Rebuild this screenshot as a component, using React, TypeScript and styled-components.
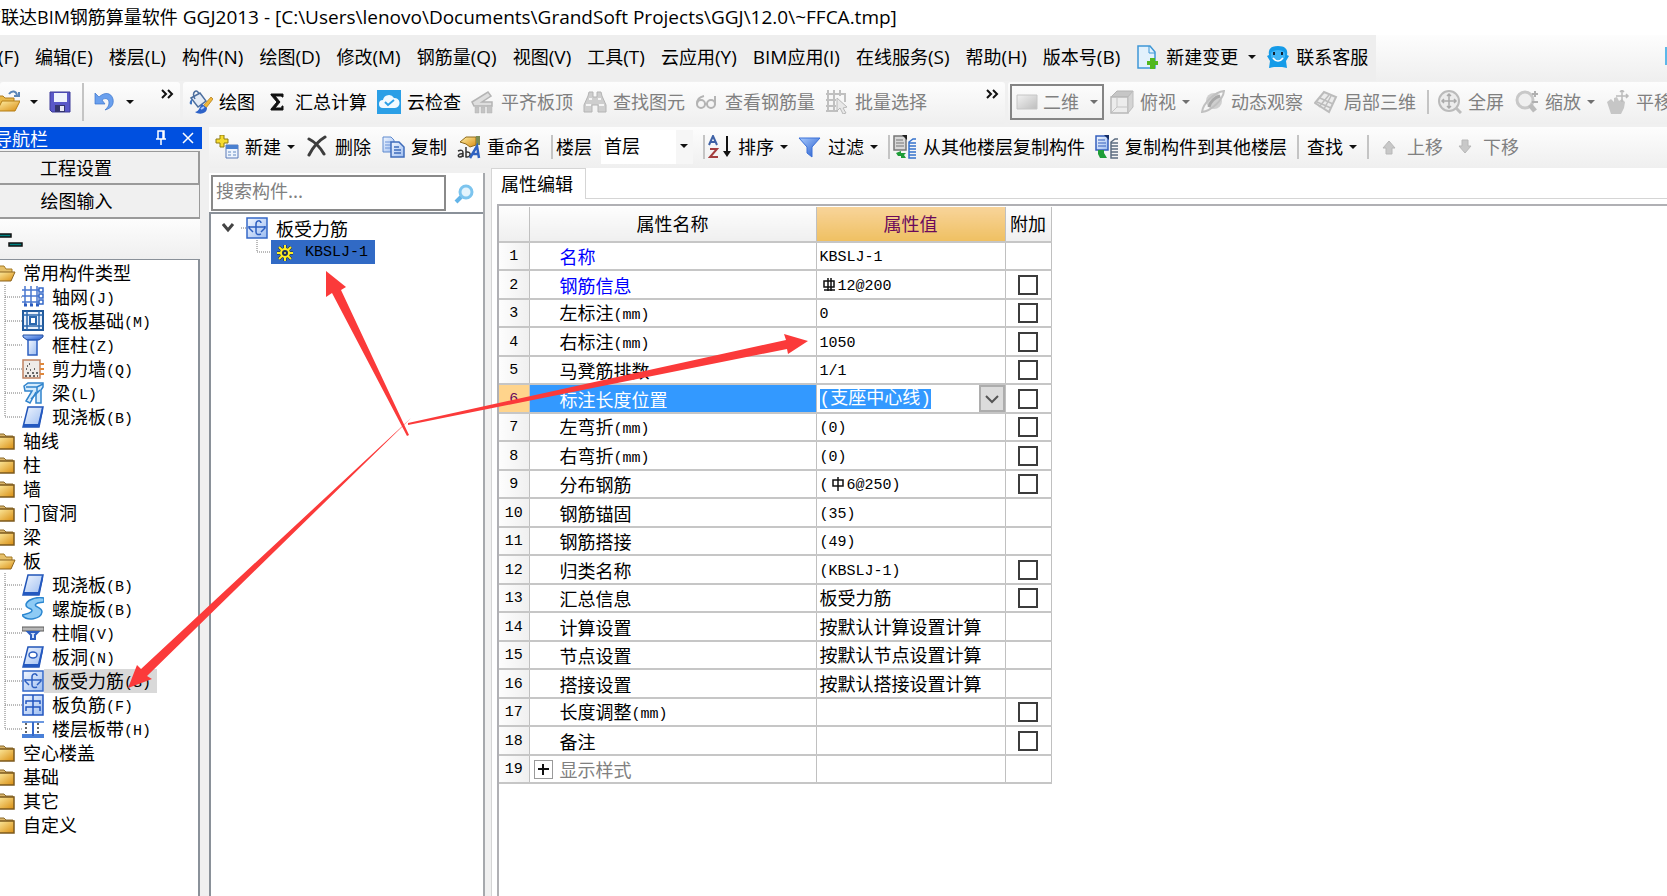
import React from 'react';
import styled, { createGlobalStyle, css } from 'styled-components';

const ui = `"Open Sans", "Noto Sans CJK SC", sans-serif`;
const song = `"Noto Sans CJK SC", sans-serif`;
const mono = `"Liberation Mono", "Noto Sans CJK SC", monospace`;

const Global = createGlobalStyle`
  * { box-sizing: border-box; }
  body { margin: 0; background: #f0f0f0; color: #000; font: 18px/24px ${ui}; overflow: hidden; }
  button, input, select { font: inherit; color: inherit; margin: 0; padding: 0; border: 0; border-radius: 0; background: none; }
  svg { display: block; flex: none; }
  ul { list-style: none; margin: 0; padding: 0; }
`;

const strip = 'linear-gradient(#fdfdfd, #efefef)';

const Page = styled.div`
  position: relative;
  min-height: 100vh;
  display: flex;
  flex-direction: column;
  overflow: hidden;
`;
const TitleBar = styled.header`
  height: 35px;
  padding-bottom: 2px;
  background: #fff;
  display: flex;
  align-items: center;
  white-space: pre;
`;
const TitleText = styled.div`
  margin-left: -17px;
`;
const Latin = styled.span`
  font-size: 19px;
  line-height: 24px;
`;
const MenuRow = styled.nav`
  height: 46px;
  display: flex;
  background: ${strip};
`;
const MenuGroup = styled.div`
  display: flex;
  align-items: center;
  gap: 16px;
  margin-left: -38px;
  padding: 0 8px 2px 0;
  background: #eee;
  white-space: nowrap;
`;
const MenuItem = styled.button`
  height: 28px;
  white-space: nowrap;
`;
const MenuTools = styled.div`
  display: flex;
  align-items: center;
  gap: 10px;
`;
const WindowEdge = styled.span`
  width: 2px;
  height: 18px;
  margin: 12px 0 0 auto;
  background: #5cb8ea;
`;
const ToolRow = styled.div`
  height: 46px;
  display: flex;
  gap: 3px;
  padding: 1px 0 3px;
`;
const Strip = styled.div<{ $gap?: number; $left?: number; $width?: number }>`
  display: flex;
  align-items: center;
  flex: none;
  gap: ${p => p.$gap ?? 10}px;
  padding-left: ${p => p.$left ?? 0}px;
  padding-bottom: 2px;
  ${p => p.$width ? css`width: ${p.$width}px;` : css`flex: 1 0 auto;`}
  background: ${strip};
  border-radius: 3px;
`;
const BuildStrip = styled.div`
  display: flex;
  align-items: center;
  gap: 10px;
  height: 41px;
  padding: 0 0 2px 6px;
  background: ${strip};
`;
const Tool = styled.button<{ $off?: boolean }>`
  display: flex;
  align-items: center;
  gap: 6px;
  height: 30px;
  flex: none;
  white-space: nowrap;
  color: ${p => p.$off ? '#808080' : '#000'};
`;
const Sep = styled.i<{ $tall?: boolean; $tight?: boolean }>`
  width: 2px;
  height: ${p => p.$tall ? 38 : 24}px;
  margin-right: ${p => p.$tight ? -7 : -2}px;
  flex: none;
  background: #c4c4c4;
`;
const More = styled.button`
  width: 16px;
  margin: 0 4px 14px auto;
`;
const ViewSelect = styled.label`
  display: flex;
  align-items: center;
  gap: 5px;
  width: 94px;
  height: 36px;
  margin-right: -5px;
  padding: 0 4px;
  border: 2px solid #858585;
  color: #808080;
`;
const PlainSelect = styled.select`
  appearance: none;
  flex: 1;
  min-width: 0;
  outline: 0;
`;
const FloorField = styled.label`
  display: flex;
  align-items: center;
  gap: 9px;
`;
const FloorBox = styled.span`
  display: flex;
  align-items: center;
  width: 92px;
  height: 34px;
  padding: 0 5px 2px 3px;
  background: linear-gradient(90deg, #fff 75px, #f6f6f6 75px);
`;
const Body = styled.div`
  flex: 1;
  display: flex;
  gap: 7px;
`;
const Sidebar = styled.aside`
  width: 202px;
  flex: none;
  display: flex;
  flex-direction: column;
`;
const SideTitle = styled.div`
  height: 22px;
  display: flex;
  align-items: center;
  gap: 16px;
  padding-right: 8px;
  background: #0050e0;
  color: #fff;
  overflow: hidden;
  font-family: ${song};
`;
const SideName = styled.span`
  margin: 0 auto 0 -6px;
`;
const SideMain = styled.div`
  flex: 1;
  display: flex;
  flex-direction: column;
  margin: 2px 2px 0 0;
`;
const SideTab = styled.button<{ $active?: boolean }>`
  height: 34px;
  padding: 0 46px 2px 0;
  border: solid #9a9a9a;
  border-width: ${p => p.$active ? '1px 2px 2px 0' : '0 1px 2px 0'};
  background: #f0f0f0;
  font-family: ${song};
`;
const SideTools = styled.div`
  height: 40px;
  background: ${strip};
`;
const SideTree = styled.div`
  flex: 1;
  padding-top: 1px;
  background: #fff;
  border: solid #8a9199;
  border-width: 1px 2px 0 0;
`;
const Row = styled.li<{ $child?: boolean }>`
  display: flex;
  align-items: center;
  height: 24px;
  gap: ${p => p.$child ? 0 : 7}px;
  white-space: nowrap;
`;
const Label = styled.span<{ $on?: boolean }>`
  padding: 0 6px 0 8px;
  height: 24px;
  background: ${p => p.$on ? '#d9d9d9' : 'none'};
`;
const Mono = styled.span`
  font-family: ${mono};
  font-size: 15px;
  line-height: 20px;
  vertical-align: 1px;
`;
const Work = styled.main`
  flex: 1;
  min-width: 0;
  display: flex;
  flex-direction: column;
`;
const Panels = styled.div`
  flex: 1;
  display: flex;
  gap: 6px;
`;
const ListPanel = styled.section`
  width: 276px;
  flex: none;
  margin-top: 5px;
  display: flex;
  flex-direction: column;
  border-right: 2px solid #a6a9ad;
`;
const Search = styled.form`
  display: flex;
  height: 39px;
  padding: 2px 0 1px 2px;
  background: #fff;
`;
const SearchInput = styled.input`
  flex: 1;
  min-width: 0;
  height: 36px;
  padding: 0 3px 6px;
  border: 2px solid #8a8a8a;
  font-family: ${song};
  &::placeholder { color: #808080; opacity: 1; }
`;
const SearchButton = styled.button`
  width: 37px;
  display: grid;
  place-items: center;
`;
const ListTree = styled.div`
  flex: 1;
  padding: 2px 0 0 11px;
  background: #fff;
  border: solid #8a9199;
  border-width: 2px 0 0 2px;
  font-family: ${song};
`;
const Picked = styled.span`
  display: flex;
  align-items: center;
  gap: 12px;
  height: 24px;
  padding: 2px 7px 0 6px;
  background: #316ac5;
`;
const PropPanel = styled.section`
  flex: 1;
  min-width: 0;
  display: flex;
  flex-direction: column;
  background: #fff;
  border-left: 1px solid #d5d5d5;
`;
const TabRow = styled.div`
  height: 31px;
  display: flex;
  &::after { content: ''; flex: 1; border-bottom: 1px solid #d5d5d5; }
`;
const Tab = styled.button`
  padding: 0 12px 2px 9px;
  border: solid #d5d5d5;
  border-width: 1px 1px 0 0;
  font-family: ${song};
`;
const Sheet = styled.div`
  flex: 1;
  margin: 5px 0 0 5px;
  padding: 1px 0 0;
  border: solid #b0b0b4;
  border-width: 2px 0 0 2px;
`;
const Table = styled.table`
  width: 552px;
  border-collapse: collapse;
  table-layout: fixed;
  font-family: ${song};
  line-height: 24px;
`;
const Th = styled.th<{ $hot?: boolean }>`
  height: 35px;
  padding: 0 0 2px;
  font-weight: 400;
  border-right: 1px solid #c0c0c0;
  border-bottom: 2px solid #c6c6c6;
  background: ${p => p.$hot ? 'linear-gradient(#f8d49a, #efc062)' : 'linear-gradient(#fdfdfd, #efefef)'};
  color: ${p => p.$hot ? '#6a0a5c' : '#000'};
`;
const Tr = styled.tr`
  height: 28px;
  &:nth-child(even) { height: 29px; }
`;
const Td = styled.td<{ $on?: boolean }>`
  padding: 0;
  border-right: 1px solid #c0c0c0;
  border-bottom: 2px solid #c6c6c6;
  white-space: nowrap;
  background: ${p => p.$on ? '#3399ff' : '#fff'};
`;
const Num = styled.th<{ $on?: boolean }>`
  padding: 2px 0 0;
  font: 15px/20px ${mono};
  border-right: 1px solid #c0c0c0;
  border-bottom: 2px solid #c6c6c6;
  color: ${p => p.$on ? '#6a0a5c' : '#000'};
  background: ${p => p.$on ? '#ffd48c' : 'linear-gradient(90deg, #fdfdfd, #f0f0f0)'};
`;
const Name = styled.div<{ $tone?: string }>`
  display: flex;
  align-items: center;
  height: 24px;
  color: ${p => p.$tone ?? '#000'};
`;
const Gutter = styled.span`
  width: 30px;
  padding-left: 4px;
  flex: none;
  color: #000;
`;
const Expand = styled.button`
  display: grid;
  place-items: center;
  width: 19px;
  height: 19px;
  border: 1px solid #9a9a9a;
`;
const Value = styled.div`
  display: flex;
  align-items: center;
  height: 24px;
  padding: 0 0 2px 3px;
`;
const Combo = styled.div`
  display: flex;
  align-items: center;
  justify-content: space-between;
  height: 26px;
  padding-left: 3px;
`;
const ComboInput = styled.input`
  width: 111px;
  height: 20px;
  background: #3399ff;
  color: #fff;
  font-family: ${mono};
`;
const ComboButton = styled.button`
  display: grid;
  place-items: center;
  width: 26px;
  height: 27px;
  background: #dcdcdc;
  border: 2px solid #adadad;
`;
const Check = styled.input`
  appearance: none;
  display: block;
  width: 20px;
  height: 20px;
  margin: 0 auto;
  border: 2px solid #3c3c3c;
  background: #fff;
`;
const Arrows = styled.svg`
  position: absolute;
  left: 0;
  top: 0;
  pointer-events: none;
`;
const Paints = styled.svg`
  position: absolute;
`;

/* Half-width runs are set in the monospaced face, the rest in the CJK one. */
const Mixed = ({ children }: { children: string }) => (
  <span>{children.split(/([\x20-\x7e]+)/).filter(Boolean).map((run, i) =>
    /^[\x20-\x7e]/.test(run) ? <Mono key={i}>{run}</Mono> : run)}</span>
);

const Svg = ({ w = 24, h = 24, children }: { w?: number; h?: number; children: React.ReactNode }) => (
  <svg width={w} height={h} viewBox={`0 0 ${w} ${h}`} fill="none" aria-hidden="true">{children}</svg>
);
const Caret = ({ color = '#111' }: { color?: string }) => (
  <Svg w={8} h={6}><path d="M0 1h8L4 5z" fill={color} /></Svg>
);

const Defs = () => (
  <Paints width="0" height="0" aria-hidden="true">
    <defs>
      <linearGradient id="gold" x1="0" y1="0" x2="1" y2="1"><stop offset="0" stopColor="#fff0a8" /><stop offset="1" stopColor="#d98d10" /></linearGradient>
      <linearGradient id="blue" x1="0" y1="0" x2="1" y2="1"><stop offset="0" stopColor="#f2f7ff" /><stop offset="1" stopColor="#9cbcf0" /></linearGradient>
      <linearGradient id="deep" x1="0" y1="0" x2="1" y2="1"><stop offset="0" stopColor="#a9cbff" /><stop offset="1" stopColor="#1f56c8" /></linearGradient>
      <linearGradient id="grey" x1="0" y1="0" x2="1" y2="1"><stop offset="0" stopColor="#f2f2f2" /><stop offset="1" stopColor="#bdbdbd" /></linearGradient>
    </defs>
  </Paints>
);

const openFolder = <g transform="translate(-4 0)"><path d="M1 20V6h6l2 2h9v4" fill="#e8b84a" stroke="#b07d1c" /><path d="M6 11h18l-5 10H1z" fill="url(#gold)" stroke="#b57e17" /><path d="M13 4c3-4 7-3 8 1m2-3v4h-5" stroke="#5b86b8" strokeWidth="2" /></g>;

const icons = {
  save: <Svg><path d="M2 2h20v20H4l-2-2z" fill="#5a58c8" stroke="#3c3a98" /><path d="M6 3h13v9H6z" fill="#f0f3fc" /><path d="M7 15h10v7H7z" fill="#35356e" /><path d="M12 16h4v5h-4z" fill="#e8e8f4" /></Svg>,
  undo: <Svg><path d="M3 3v11h10l-3-4c4-3 7-1 7 3 0 3-2 5-4 7 7-2 9-6 8-11-2-7-9-7-14-2z" fill="#6aa0ee" stroke="#3b74cc" strokeWidth=".7" /></Svg>,
  paint: <Svg><path d="M2 8l9-5 6 8-8 6z" fill="#e4ebf5" stroke="#4d6f9f" strokeWidth="1.5" /><path d="M6 9C2 2 8-2 10 4" stroke="#4d6f9f" strokeWidth="1.5" /><path d="M3 9c-4 3-2 7 0 5z" fill="#3f74c0" /><path d="M24 9l-7 9-3-2 8-9z" fill="#f1b83b" stroke="#a97411" strokeWidth=".7" /><path d="M13 14l5 4c0 6-8 7-12 4 5-1 4-5 7-8z" fill="#2d62c8" /><path d="M12 19l3-2" stroke="#a9c8ff" strokeWidth="2" /></Svg>,
  sigma: <Svg><path d="M18 7V4H6v1l6 7-6 7v1h12v-4h-1c0 2-1 2-3 2H10l5-6-5-6h4c2 0 3 0 3 1z" fill="#111" stroke="#111" /></Svg>,
  cloud: <Svg><path d="M0 0h24v24H0z" fill="#2b9fe6" /><path d="M6 18a4 4 0 010-8 6 6 0 0111-2 5 5 0 011 10z" fill="#f2faff" /><path d="M8 12l3 3 6-5" stroke="#2b9fe6" strokeWidth="2" /></Svg>,
  level: <Svg><path d="M1 12L17 2l3 4-9 6h10v4H3z" fill="#dedede" stroke="#b4b4b4" strokeWidth="1.5" /><path d="M4 17h4v6H4zm6 0h4v6h-4zm6-1h5v7h-5z" fill="#c4c4c4" stroke="#b4b4b4" strokeWidth=".5" /></Svg>,
  find: <Svg><path d="M6 2h4v5h4V2h4l1 4 4 9v7h-8v-7h-6v7H1v-7l4-9z" fill="#cecece" stroke="#b4b4b4" /><path d="M3 15h5m8 0h5M6 9h3m6 0h3" stroke="#f5f5f5" strokeWidth="2" /></Svg>,
  glasses: <Svg><path d="M9 6C4 7 2 10 2 14" stroke="#b4b4b4" strokeWidth="2" /><circle cx="6" cy="14" r="4" stroke="#b4b4b4" strokeWidth="2" /><circle cx="16" cy="14" r="4" stroke="#b4b4b4" strokeWidth="2" /><path d="M10 14h2M20 6v9" stroke="#b4b4b4" strokeWidth="2" /></Svg>,
  batch: <Svg><path d="M3 0v22M9 0v22M15 0v6M1 4h20M1 10h10M1 16h10M1 21h12M20 4v8" stroke="#c0c0c0" strokeWidth="2" /><path d="M12 8l10 9-4 1 3 5-3 1-3-6-3 3z" fill="#e8e8e8" stroke="#b8b8b8" /></Svg>,
  flat: <Svg w={22}><path d="M1 5h20v14H1z" fill="url(#grey)" stroke="#c6c6c6" /></Svg>,
  cube: <Svg><path d="M1 7l6-6h16l-5 6z" fill="#c6c6c6" stroke="#b4b4b4" /><path d="M1 7h17v16H1z" fill="#ececec" stroke="#b8b8b8" strokeWidth="1.5" /><path d="M18 7l5-6v16l-5 6z" fill="#d4d4d4" stroke="#bcbcbc" /><path d="M2 22l5-5h11M7 17V8" stroke="#c4c4c4" /></Svg>,
  orbit: <Svg><circle cx="13" cy="11" r="8" fill="#cfcfcf" /><path d="M23 1c-9 1-21 12-22 21 9-1 21-12 22-21z" stroke="#c0c0c0" strokeWidth="2" /><path d="M8 17C9 12 14 7 19 6" stroke="#a8a8a8" strokeWidth="3" /></Svg>,
  local: <Svg><path d="M1 13L10 2l12 5-7 15z" fill="#ececec" stroke="#bcbcbc" strokeWidth="2" /><path d="M6 8l13 6M5 17L15 5M10 19l7-13M3 12l14 6" stroke="#bcbcbc" strokeWidth="1.5" /></Svg>,
  full: <Svg><circle cx="11" cy="11" r="10" fill="#ececec" stroke="#bbb" strokeWidth="2" /><path d="M11 4v14M4 11h14M9 6l2-2 2 2M9 16l2 2 2-2M6 9l-2 2 2 2M16 9l2 2-2 2" stroke="#aaa" strokeWidth="1.5" /><path d="M18 18l5 5" stroke="#bdbdbd" strokeWidth="3" /></Svg>,
  zoom: <Svg><circle cx="10" cy="10" r="8" fill="#efefef" stroke="#c8c8c8" strokeWidth="3" /><path d="M15 15l5 6" stroke="#bbb" strokeWidth="5" /><path d="M17 4h6m-3-3v6m-3 5h6" stroke="#b0b0b0" strokeWidth="2" /></Svg>,
  pan: <Svg><path d="M1 12l4-3 3 3V8l3-1 2 4 3-2 3 3-1 6-3 6H5z" fill="#c6c6c6" /><path d="M16 0v12M10 6h12M14 2l2-2 2 2m2 2l2 2-2 2" stroke="#bbb" strokeWidth="1.5" /></Svg>,
  create: <Svg><path d="M5 0h4v4h4v4H9v4H5V8H1V4h4z" fill="#f7dc2e" stroke="#8e7a12" /><path d="M11 10h12v13H11z" fill="#eef4fd" stroke="#5a7bb8" /><path d="M11 10h12v4H11z" fill="#4a80d0" /><path d="M13 17h3m2 0h3m-8 3h3m2 0h3" stroke="#a8bfdf" strokeWidth="2" /></Svg>,
  remove: <Svg><path d="M4 4c6 3 11 8 15 15M20 2C13 6 8 12 4 20" stroke="#3d3d3d" strokeWidth="3" strokeLinecap="round" /></Svg>,
  copy: <Svg><path d="M2 2h8l3 3v12H2z" fill="url(#blue)" stroke="#5f8ace" /><path d="M4 7h6m-6 3h6m-6 3h6" stroke="#6c94d8" /><path d="M10 7h8l5 5v10H10z" fill="url(#blue)" stroke="#3f6cba" strokeWidth="1.5" /><path d="M13 12h5m-5 3h7m-7 3h7" stroke="#3f6cba" strokeWidth="1.5" /></Svg>,
  rename: <Svg><path d="M3 7l6-5h10v8l-6 2-4-3z" fill="url(#gold)" stroke="#8e6a1c" /><path d="M19 1h4v9h-4z" fill="#7a8a52" /><path d="M1 16c4-2 5 0 5 2v4m0-3c-5-1-6 3-3 3 2 0 3-1 3-3M9 12v10c5 1 6-6 0-5" stroke="#333" strokeWidth="1.5" /><path d="M13 23l7-12 2 12m-6-4h6" stroke="#2f62c0" strokeWidth="2.5" /></Svg>,
  sort: <Svg><path d="M1 10L5 1l4 9M3 7h5" stroke="#3f62a6" strokeWidth="2" /><path d="M2 14h7l-7 8h8" stroke="#a43e3e" strokeWidth="2" /><path d="M19 1v16" stroke="#111" strokeWidth="2" /><path d="M15 16h8l-4 6z" fill="#111" /></Svg>,
  filter: <Svg><path d="M1 3h21l-8 9v10l-5-4v-6z" fill="url(#deep)" stroke="#3a70d8" /></Svg>,
  fromFloor: <Svg><path d="M1 1h12v14H1z" fill="#d8d8d8" stroke="#777" strokeWidth="1.5" /><path d="M3 5h7M3 8h8M3 11h8" stroke="#777" /><path d="M9 0h5v5z" fill="#222" /><path d="M3 18l5-2v2h5l-2 2 2 3H8v-2H5z" fill="#1f9d38" /><path d="M23 4h-3l-4 3v16h7M16 8h7m-7 3h7m-7 3h7m-7 3h7m-7 3h7" stroke="#3572cc" strokeWidth="1.5" /></Svg>,
  toFloor: <Svg><path d="M1 1h12v14H1z" fill="url(#blue)" stroke="#345fbd" strokeWidth="1.5" /><path d="M3 5h7M3 8h8M3 11h8" stroke="#345fbd" /><path d="M9 0h5v5z" fill="#142d66" /><path d="M3 15h6v3l3 5H5l-2-4z" fill="#1f9d38" /><path d="M23 4h-3l-4 3v16h7M16 8h7m-7 3h7m-7 3h7m-7 3h7m-7 3h7" stroke="#5c6c80" strokeWidth="1.5" /></Svg>,
  up: <Svg><path d="M12 6l6 7h-3v6H9v-6H6z" fill="#c8c8c8" stroke="#b8b8b8" /></Svg>,
  down: <Svg><path d="M12 18l6-7h-3V5H9v6H6z" fill="#c8c8c8" stroke="#b8b8b8" /></Svg>,
  change: <Svg><path d="M2 1h12l5 6v16H2z" fill="#e2f1fc" stroke="#3f97d6" strokeWidth="1.5" /><path d="M13 1v7h6" stroke="#3f97d6" /><path d="M14 13h5v3h3v4h-3v4h-5v-4h-3v-4h3z" fill="#52b81e" /></Svg>,
  support: <Svg><path d="M12 1c8 0 10 4 9 9l2 1-3 5 1 7-5-1h-8l-5 1 1-7-3-5 2-1C2 5 4 1 12 1z" fill="#159be8" /><path d="M5 8c2-4 12-4 14 0v4c-3 6-11 6-14 0z" fill="#3fb4f5" /><path d="M8 7v3m8-3v3" stroke="#123" strokeWidth="2" /><path d="M7 13c3 4 7 4 10 0" stroke="#fff" strokeWidth="1.5" /></Svg>,
};

const folder = <Svg w={16}><path d="M-2 8V5h6l2 2h7v3" fill="#d9b469" stroke="#8b6a2c" /><path d="M-4 8h18v12H-4z" fill="url(#gold)" stroke="#7c5a1e" strokeWidth="1.5" /></Svg>;
const folderOpen = <Svg w={16}><path d="M-2 19V5h6l2 3h6v4" fill="#e6c06a" stroke="#a57a24" /><path d="M-2 11h17l-4 9H-4z" fill="url(#gold)" stroke="#8b6420" /></Svg>;

const slab = <path d="M6 2h15l-4 20H1z" fill="url(#blue)" stroke="#2255b8" strokeWidth="1.5" />;
const slabFoot = <path d="M1 19h15l4-17h1v4l-4 16H1z" fill="#2459c0" />;
const kinds: Record<string, React.ReactNode> = {
  grid: <Svg w={22}><path d="M3 1v20M9 1v20M15 1v20M0 5h20M0 11h20M0 17h20" stroke="#4a78d0" strokeWidth="1.5" /><path d="M2 20h3m3 0h3m3 0h3" stroke="#2b5cc0" strokeWidth="3" /><path d="M17 3h4v4h-4zm0 6h4v4h-4zm0 6h4v4h-4z" fill="#fff" stroke="#3568c8" strokeWidth="1.5" /></Svg>,
  raft: <Svg w={22}><path d="M1 2h20v19H1z" fill="#e8f0fb" stroke="#215a9c" strokeWidth="2" /><path d="M5 2v19M17 2v19M1 6h20M1 17h20" stroke="#2b68ae" strokeWidth="1.5" /><path d="M8 8h6v7H8z" fill="#fff" stroke="#2b68ae" strokeWidth="2" /></Svg>,
  column: <Svg w={22}><path d="M1 2h20v2l-4 3H5L1 4z" fill="url(#deep)" stroke="#234f9f" /><path d="M6 7h9v15H6z" fill="url(#blue)" stroke="#2d5fc0" strokeWidth="1.5" /></Svg>,
  wall: <Svg w={22}><path d="M1 3h17v18H1z" fill="#efebe8" stroke="#c08262" strokeWidth="1.5" /><path d="M3 19h2m2 0h2m2 0h2m2 0h1M5 16h2m3 0h2m2 0h2M4 12h1m3 1h1m-2-6h1m-3 2h1m6 3h1" stroke="#666" strokeWidth="2" /><path d="M18 7h4m-4 5h4m-4 5h4" stroke="#e0873a" strokeWidth="2" /></Svg>,
  beam: <Svg w={22}><path d="M2 5l4-3h15v4l-2 3v13h-5V11l-6 11-4-2 6-10H3z" fill="#d5ebfc" stroke="#3184cc" strokeWidth="1.5" /><path d="M4 6h11l6-3M9 18l9-9M15 6v5" stroke="#3184cc" strokeWidth="1.5" /></Svg>,
  slab: <Svg w={22}>{slab}{slabFoot}</Svg>,
  spiral: <Svg w={22}><path d="M22 1C10-1 1 6 5 10c2 2 7 2 4 5-2 2-6 2-9 3 5 7 19 4 20-3 0-5-9-5-6-8 2-2 6-1 8-2z" fill="#8ecbf5" stroke="#2a86d0" strokeWidth="1.5" /></Svg>,
  cap: <Svg w={22}><path d="M0 6h22v4H0z" fill="#b8b8b8" stroke="#5a5a5a" /><path d="M6 11h10l-3 3v4H9v-4z" fill="#cfe0fa" stroke="#2d5fc0" strokeWidth="2" /></Svg>,
  hole: <Svg w={22}>{slab}{slabFoot}<ellipse cx="11" cy="10" rx="4" ry="3" fill="#fff" stroke="#2d5fc0" strokeWidth="1.5" /></Svg>,
  rebar: <Svg w={22}><path d="M1 2h20v20H1z" fill="url(#blue)" stroke="#3568c8" strokeWidth="1.5" /><path d="M3 10v2l4 4M19 10v2l-4 4M3 11h16M15 7c0-3-5-3-5 1v8c0 3 3 3 5 2" stroke="#2d5fc0" strokeWidth="1.5" /></Svg>,
  negative: <Svg w={22}><path d="M1 2h20v20H1z" fill="url(#blue)" stroke="#2255c0" strokeWidth="1.5" /><path d="M11 2v20M4 11V8h14v3M4 18v-4h14v4" stroke="#2255c0" strokeWidth="1.5" /></Svg>,
  band: <Svg w={22}><path d="M0 5h22" stroke="#6b98e0" strokeWidth="2" /><path d="M0 19h22" stroke="#4a80d8" strokeWidth="4" /><path d="M11 5v14" stroke="#3568c8" strokeWidth="2" /><path d="M4 6v11M16 6v11" stroke="#333" strokeWidth="1.5" strokeDasharray="2 2" /></Svg>,
};

type Node = { name: string; items?: [string, string, boolean?][] };
const tree: Node[] = [
  { name: '常用构件类型', items: [['grid', '轴网(J)'], ['raft', '筏板基础(M)'], ['column', '框柱(Z)'], ['wall', '剪力墙(Q)'], ['beam', '梁(L)'], ['slab', '现浇板(B)']] },
  { name: '轴线' }, { name: '柱' }, { name: '墙' }, { name: '门窗洞' }, { name: '梁' },
  { name: '板', items: [['slab', '现浇板(B)'], ['spiral', '螺旋板(B)'], ['cap', '柱帽(V)'], ['hole', '板洞(N)'], ['rebar', '板受力筋(S)', true], ['negative', '板负筋(F)'], ['band', '楼层板带(H)']] },
  { name: '空心楼盖' }, { name: '基础' }, { name: '其它' }, { name: '自定义' },
];

type Prop = { name: string; value?: string; check?: boolean; tone?: string; bar?: number; lead?: string };
const props: Prop[] = [
  { name: '名称', value: 'KBSLJ-1', tone: '#0000ff' },
  { name: '钢筋信息', value: '12@200', check: true, tone: '#0000ff', bar: 2 },
  { name: '左标注(mm)', value: '0', check: true },
  { name: '右标注(mm)', value: '1050', check: true },
  { name: '马凳筋排数', value: '1/1', check: true },
  { name: '标注长度位置', value: '(支座中心线)', check: true, tone: '#fff' },
  { name: '左弯折(mm)', value: '(0)', check: true },
  { name: '右弯折(mm)', value: '(0)', check: true },
  { name: '分布钢筋', value: '6@250)', check: true, bar: 1, lead: '(' },
  { name: '钢筋锚固', value: '(35)' },
  { name: '钢筋搭接', value: '(49)' },
  { name: '归类名称', value: '(KBSLJ-1)', check: true },
  { name: '汇总信息', value: '板受力筋', check: true },
  { name: '计算设置', value: '按默认计算设置计算' },
  { name: '节点设置', value: '按默认节点设置计算' },
  { name: '搭接设置', value: '按默认搭接设置计算' },
  { name: '长度调整(mm)', check: true },
  { name: '备注', check: true },
  { name: '显示样式', tone: '#808080' },
];

const BarMark = ({ strokes }: { strokes: number }) => (
  <Svg w={18} h={18}>
    <path d="M4 6h10v6H4z" stroke="#111" strokeWidth="1.5" />
    <path d={strokes === 2 ? 'M8 3v13M11 3v13M4 15h11' : 'M9 3v14'} stroke="#111" strokeWidth="1.5" />
  </Svg>
);

const Link = ({ last }: { last: boolean }) => (
  <Svg w={22}><path d={last ? 'M5 0v12h17' : 'M5 0v24M5 12h17'} stroke="#777" strokeDasharray="1 1" /></Svg>
);

const T = ({ icon, off, caret, children }: { icon?: keyof typeof icons; off?: boolean; caret?: boolean; children?: React.ReactNode }) => (
  <Tool $off={off}>{icon && icons[icon]}{children}{caret && <Caret color={off ? '#707070' : '#111'} />}</Tool>
);

const Chevrons = () => <Svg w={16} h={12}><path d="M2 1l4 4-4 4M8 1l4 4-4 4" stroke="#111" strokeWidth="2" /></Svg>;

const menus = ['文件(F)', '编辑(E)', '楼层(L)', '构件(N)', '绘图(D)', '修改(M)', '钢筋量(Q)', '视图(V)', '工具(T)', '云应用(Y)', 'BIM应用(I)', '在线服务(S)', '帮助(H)', '版本号(B)'];

function BuildTools() {
  return (
    <BuildStrip>
      <T icon="create" caret>新建</T>
      <T icon="remove">删除</T>
      <T icon="copy">复制</T>
      <T icon="rename">重命名</T>
      <Sep $tight />
      <FloorField>
        楼层
        <FloorBox>
          <PlainSelect><option>首层</option></PlainSelect>
          <Caret />
        </FloorBox>
      </FloorField>
      <Sep $tight />
      <T icon="sort" caret>排序</T>
      <T icon="filter" caret>过滤</T>
      <Sep $tight />
      <T icon="fromFloor">从其他楼层复制构件</T>
      <T icon="toFloor">复制构件到其他楼层</T>
      <Sep />
      <T caret>查找</T>
      <Sep />
      <T icon="up" off>上移</T>
      <T icon="down" off>下移</T>
    </BuildStrip>
  );
}

export default function App() {
  return (
    <Page>
      <Global />
      <Defs />
      <TitleBar>
        <TitleText>广联达BIM钢筋算量软件<Latin>{' GGJ2013 - [C:\\Users\\lenovo\\Documents\\GrandSoft Projects\\GGJ\\12.0\\~FFCA.tmp]'}</Latin></TitleText>
      </TitleBar>
      <MenuRow>
        <MenuGroup>
          {menus.map(m => <MenuItem key={m}>{m.split(/([A-Z()]+)/).map((s, i) => i % 2 ? <Latin key={i}>{s}</Latin> : s)}</MenuItem>)}
          <MenuTools>
            <T icon="change">新建变更</T>
            <Caret />
            <T icon="support">联系客服</T>
          </MenuTools>
        </MenuGroup>
        <WindowEdge />
      </MenuRow>
      <ToolRow>
        <Strip $width={180} $gap={10}>
          <Tool aria-label="打开"><Svg w={20}>{openFolder}</Svg></Tool>
          <Caret />
          <T icon="save" />
          <Sep $tall />
          <T icon="undo" />
          <Caret />
          <More aria-label="更多"><Chevrons /></More>
        </Strip>
        <Strip $width={822} $left={6}>
          <T icon="paint">绘图</T>
          <T icon="sigma">汇总计算</T>
          <T icon="cloud">云检查</T>
          <T icon="level" off>平齐板顶</T>
          <T icon="find" off>查找图元</T>
          <T icon="glasses" off>查看钢筋量</T>
          <T icon="batch" off>批量选择</T>
          <More aria-label="更多"><Chevrons /></More>
        </Strip>
        <Strip $left={2} $gap={11}>
          <ViewSelect>
            {icons.flat}
            <PlainSelect aria-label="视图模式"><option>二维</option></PlainSelect>
            <Caret color="#707070" />
          </ViewSelect>
          <T icon="cube" off caret>俯视</T>
          <T icon="orbit" off>动态观察</T>
          <T icon="local" off>局部三维</T>
          <Sep />
          <T icon="full" off>全屏</T>
          <T icon="zoom" off caret>缩放</T>
          <T icon="pan" off>平移</T>
        </Strip>
      </ToolRow>
      <Body>
        <Sidebar>
          <SideTitle>
            <SideName>导航栏</SideName>
            <Svg w={10} h={16}><path d="M2 1h6v8H2zM0 9h10M5 9v6M7 1v8" stroke="#fff" strokeWidth="1.5" /></Svg>
            <Svg w={12} h={12}><path d="M1 1l10 10M11 1L1 11" stroke="#fff" strokeWidth="1.5" /></Svg>
          </SideTitle>
          <SideMain>
            <SideTab $active>工程设置</SideTab>
            <SideTab>绘图输入</SideTab>
            <SideTools>
              <Svg h={30}><path d="M-2 15h13v3H-2zM9 24h13v3H9z" fill="#008080" stroke="#111" strokeWidth="1.5" /></Svg>
            </SideTools>
            <SideTree>
              <ul>
                {tree.map((n, k) => (
                  <React.Fragment key={k}>
                    <Row>{n.items ? folderOpen : folder}<span>{n.name}</span></Row>
                    {n.items?.map(([icon, text, on], i) => (
                      <Row key={text} $child>
                        <Link last={i === n.items!.length - 1} />
                        {kinds[icon]}
                        <Label $on={on}><Mixed>{text}</Mixed></Label>
                      </Row>
                    ))}
                  </React.Fragment>
                ))}
              </ul>
            </SideTree>
          </SideMain>
        </Sidebar>
        <Work>
          <BuildTools />
          <Panels>
            <ListPanel>
              <Search onSubmit={e => e.preventDefault()}>
                <SearchInput aria-label="搜索构件" placeholder="搜索构件..." />
                <SearchButton aria-label="搜索">
                  <Svg><circle cx="13" cy="11" r="6" fill="#e4f4fd" stroke="#7cc4ee" strokeWidth="3" /><path d="M8 16l-5 5" stroke="#63b4e8" strokeWidth="4" /></Svg>
                </SearchButton>
              </Search>
              <ListTree>
                <ul>
                  <Row $child>
                    <Svg w={24}><path d="M1 8l5 6 5-6" stroke="#444" strokeWidth="3" /><path d="M19 12h5" stroke="#777" strokeDasharray="1 1" /></Svg>
                    {kinds.rebar}
                    <Label>板受力筋</Label>
                  </Row>
                  <Row $child>
                    <Svg w={49}><path d="M35 0v12h14" stroke="#777" strokeDasharray="1 1" /></Svg>
                    <Picked>
                      <Svg w={16} h={16}><path d="M8 0v16M0 8h16M2 2l12 12M14 2L2 14" stroke="#222" strokeWidth="3" /><path d="M8 0v16M0 8h16M2 2l12 12M14 2L2 14" stroke="#ffee22" strokeWidth="2" /><circle cx="8" cy="8" r="4" fill="#1d2f5a" stroke="#ffee22" strokeWidth="2" /><circle cx="8" cy="8" r="1" fill="#ffee22" /></Svg>
                      <Mono>KBSLJ-1</Mono>
                    </Picked>
                  </Row>
                </ul>
              </ListTree>
            </ListPanel>
            <PropPanel>
              <TabRow><Tab>属性编辑</Tab></TabRow>
              <Sheet>
                <Table>
                  <colgroup><col width="30" /><col width="287" /><col width="189" /><col width="46" /></colgroup>
                  <thead>
                    <tr><Th aria-label="序号" /><Th>属性名称</Th><Th $hot>属性值</Th><Th>附加</Th></tr>
                  </thead>
                  <tbody>
                    {props.map((p, i) => (
                      <Tr key={p.name}>
                        <Num $on={i === 5}>{i + 1}</Num>
                        <Td $on={i === 5}>
                          <Name $tone={p.tone}>
                            <Gutter>{i === 18 && <Expand aria-label="展开"><Svg w={11} h={11}><path d="M0 5h11M5 0v11" stroke="#111" strokeWidth="2" /></Svg></Expand>}</Gutter>
                            <Mixed>{p.name}</Mixed>
                          </Name>
                        </Td>
                        <Td>
                          {i === 5 ? (
                            <Combo>
                              <ComboInput aria-label={p.name} defaultValue={p.value} />
                              <ComboButton aria-label="展开选项"><Svg w={14} h={10}><path d="M1 2l6 6 6-6" stroke="#555" strokeWidth="2" /></Svg></ComboButton>
                            </Combo>
                          ) : (
                            <Value>{p.lead && <Mixed>{p.lead}</Mixed>}{p.bar && <BarMark strokes={p.bar} />}{p.value && <Mixed>{p.value}</Mixed>}</Value>
                          )}
                        </Td>
                        <Td>{p.check && <Check type="checkbox" aria-label={`附加 ${p.name}`} />}</Td>
                      </Tr>
                    ))}
                  </tbody>
                </Table>
              </Sheet>
            </PropPanel>
          </Panels>
        </Work>
      </Body>
      <Arrows width="820" height="700" viewBox="0 0 820 700" fill="#fb3a3a" aria-hidden="true">
        <path d="M326 271l20 16-5 3 68 145-2 1-75-143-6 4z" />
        <path d="M408 423l378-83-2-6 24 7-20 13-1-5-379 76z" />
        <path d="M411 418L141 669l-4-4-9 23 24-9-5-3L405 424z" />
      </Arrows>
    </Page>
  );
}
